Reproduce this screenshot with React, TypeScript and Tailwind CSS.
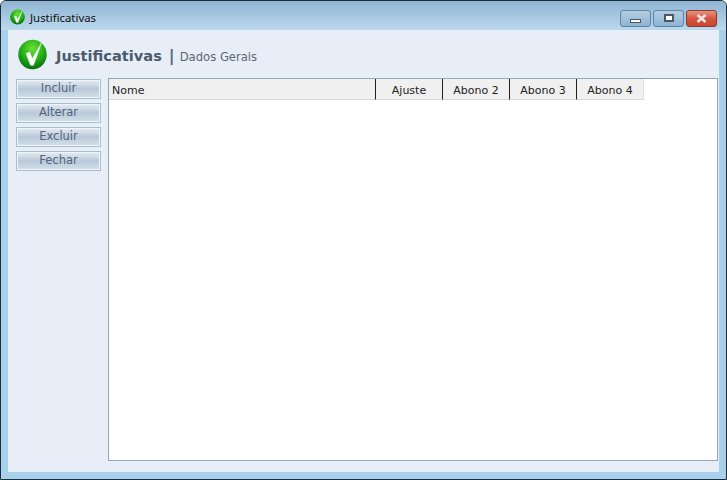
import React from "react"

function CheckBall({ width, height, id }: { width: number; height: number; id: string }) {
  return (
    <svg width={width} height={height} viewBox="0 0 30 31" className="shrink-0">
      <defs>
        <radialGradient id={id} cx="50%" cy="30%" r="75%">
          <stop offset="0%" stopColor="#6ce03a" />
          <stop offset="55%" stopColor="#1fae14" />
          <stop offset="100%" stopColor="#05640a" />
        </radialGradient>
      </defs>
      <ellipse cx="15" cy="15.5" rx="14.7" ry="15.2" fill={`url(#${id})`} />
      <path d="M8.5 14.5 L12 13 L14.8 20 L24 4 L16 26.5 L13 26.5 Z" fill="#ffffff" stroke="#ffffff" strokeWidth="0.6" strokeLinejoin="round" />
    </svg>
  )
}

function WindowButton({ className, children }: { className: string; children: React.ReactNode }) {
  return (
    <div className={`flex h-[17px] w-[31px] items-center justify-center rounded-[3px] border ${className}`}>
      {children}
    </div>
  )
}

function SideButton({ label }: { label: string }) {
  return (
    <div className="flex h-[20px] w-[85px] items-center justify-center border border-[#a8c0cc] bg-gradient-to-b from-[#e6edf3] via-[#b9c9d9] to-[#d5e0ea] text-[11.5px] text-[#55647c] shadow-[inset_0_0_0_1px_#eef4f8]">
      {label}
    </div>
  )
}

function HeaderCell({ label }: { label: string }) {
  return (
    <div className="flex h-[21px] w-[67px] items-center justify-center border-b border-l border-b-[#d9d9d9] border-l-[#222] bg-[#f0f0f0] pt-[5px] text-[11px] text-[#222]">
      {label}
    </div>
  )
}

export default function App() {
  return (
    <div className="flex h-[480px] w-[727px] flex-col overflow-hidden rounded-t-[6px] border border-[#1c2c3a] bg-[#a9d0ea] font-['DejaVu_Sans',sans-serif]">
      <div className="flex h-[29px] shrink-0 items-center bg-gradient-to-b from-[#8fb4d2] to-[#bcd9ee] pl-[9px] pr-[9px] pt-[5px]">
        <div className="-mt-[3px]">
          <CheckBall width={15} height={16} id="small" />
        </div>
        <span className="-mt-[1px] ml-[5px] font-['Noto_Sans',sans-serif] text-[11.4px] text-[#111]">Justificativas</span>
        <div className="ml-auto flex gap-[2px]">
          <WindowButton className="border-[#5f84a4] bg-gradient-to-b from-[#b4cde2] to-[#8fb4d3]">
            <div className="mt-[6px] h-[4px] w-[11px] border border-[#4a5866] bg-white" />
          </WindowButton>
          <WindowButton className="border-[#5f84a4] bg-gradient-to-b from-[#b4cde2] to-[#8fb4d3]">
            <div className="h-[8px] w-[10px] border-2 border-[#4a5866] bg-white" />
          </WindowButton>
          <WindowButton className="border-[#8a3a30] bg-gradient-to-b from-[#e8917e] via-[#d8553f] to-[#c9452f]">
            <svg width="11" height="9" viewBox="0 0 11 9">
              <path d="M1.5 1 L9.5 8 M9.5 1 L1.5 8" stroke="#f4e8e6" strokeWidth="2.4" />
            </svg>
          </WindowButton>
        </div>
      </div>
      <div className="mx-[7px] flex min-h-0 flex-1 flex-col bg-[#e7eef7]">
        <div className="flex h-[48px] shrink-0 items-center pl-[10px]">
          <CheckBall width={29} height={31} id="big" />
          <span className="ml-[9px] mt-[3px] text-[14.6px] font-bold text-[#4d5a6c]">Justificativas</span>
          <span className="ml-[7px] mt-[3px] text-[16px] font-bold leading-none text-[#5a6678]">|</span>
          <span className="ml-[5px] mt-[8px] text-[11.6px] text-[#5a6678]">Dados Gerais</span>
        </div>
        <div className="flex min-h-0 flex-1 pl-[8px] pr-[1px]">
          <div className="flex w-[85px] shrink-0 flex-col gap-[4px] pt-[1px]">
            <SideButton label="Incluir" />
            <SideButton label="Alterar" />
            <SideButton label="Excluir" />
            <SideButton label="Fechar" />
          </div>
          <div className="ml-[7px] flex h-[383px] flex-1 items-start border border-[#8fa8b4] bg-white">
            <div className="flex h-[21px] w-[266px] items-center border-b border-[#d9d9d9] bg-[#f0f0f0] pl-[3px] pt-[5px] text-[11px] text-[#222]">Nome</div>
            <HeaderCell label="Ajuste" />
            <HeaderCell label="Abono 2" />
            <HeaderCell label="Abono 3" />
            <HeaderCell label="Abono 4" />
            <div className="h-[21px] w-px bg-[#e0e0e0]" />
          </div>
        </div>
        <div className="h-[11px] shrink-0" />
      </div>
      <div className="h-[7px] shrink-0 bg-[#a9d0ea]" />
    </div>
  )
}
